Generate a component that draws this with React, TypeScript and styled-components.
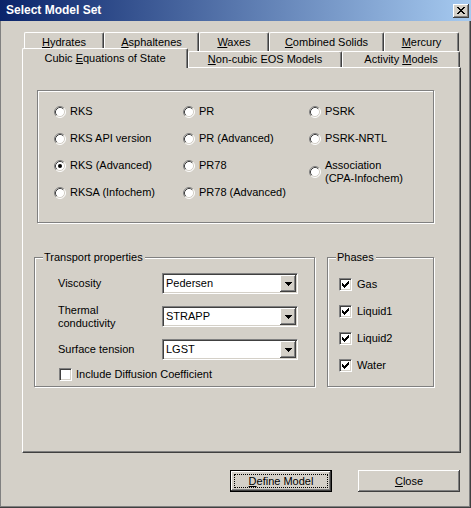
import { FC, Fragment } from "react";
import styled, { createGlobalStyle } from "styled-components";

const GlobalStyle = createGlobalStyle`
	html, body {
		margin: 0;
		padding: 0;
		background: #d4d0c8;
	}
	body {
		font-family: "Liberation Sans", Arial, sans-serif;
		font-size: 11px;
		line-height: 13px;
		color: #000;
	}
	* {
		box-sizing: border-box;
	}
`;

const Window = styled.div`
	width: 471px;
	height: 508px;
	display: flex;
	flex-direction: column;
	background: #d4d0c8;
	overflow: hidden;
`;

const TitleBar = styled.div`
	height: 21px;
	flex: none;
	display: flex;
	align-items: center;
	justify-content: space-between;
	padding: 0 2px 0 6px;
	background: linear-gradient(to right, #0a246a, #a6caf0);
`;

const Title = styled.span`
	color: #fff;
	font-weight: bold;
	font-size: 12px;
`;

const CaptionButton = styled.div`
	width: 16px;
	height: 14px;
	display: flex;
	align-items: center;
	justify-content: center;
	background: #d4d0c8;
	box-shadow: inset -1px -1px #404040, inset 1px 1px #fff, inset -2px -2px #808080;
`;

const Body = styled.div`
	flex: 1;
	display: flex;
	flex-direction: column;
	padding: 11px 10px 0 22px;
	box-shadow: inset -1px -1px #404040, inset -2px -2px #808080, inset 1px 0 #808080;
`;

const TabRow = styled.div<{ $h: number; $indent: number }>`
	display: flex;
	align-items: flex-end;
	height: ${(p) => p.$h}px;
	padding-left: ${(p) => p.$indent}px;
`;

const Tab = styled.div<{ $w: number; $active?: boolean }>`
	position: relative;
	width: ${(p) => p.$w}px;
	height: ${(p) => (p.$active ? "20px" : "100%")};
	margin-bottom: ${(p) => (p.$active ? "-1px" : "0")};
	z-index: ${(p) => (p.$active ? 1 : 0)};
	display: flex;
	align-items: center;
	justify-content: center;
	background: #d4d0c8;
	border-top: 1px solid #fff;
	border-left: 1px solid #fff;
	border-right: 1px solid #404040;
	border-radius: 2px 2px 0 0;
	box-shadow: inset -1px 0 #808080;
	white-space: nowrap;
`;

const Key = styled.span`
	text-decoration: underline;
`;

const Panel = styled.div`
	height: 386px;
	display: flex;
	flex-direction: column;
	padding: 22px 0 0 11px;
	border-top: 1px solid #fff;
	border-left: 1px solid #fff;
	border-right: 1px solid #404040;
	border-bottom: 1px solid #404040;
	box-shadow: inset -1px -1px #808080;
`;

const Group = styled.div<{ $w: number; $h: number; $ml?: number }>`
	position: relative;
	width: ${(p) => p.$w}px;
	height: ${(p) => p.$h}px;
	margin-left: ${(p) => p.$ml ?? 0}px;
	border: 1px solid #808080;
	box-shadow: inset 1px 1px #fff, 1px 1px #fff;
`;

const Legend = styled.span`
	position: absolute;
	top: -7px;
	left: 8px;
	padding: 0 2px 0 1px;
	background: #d4d0c8;
`;

const RadioGrid = styled.div`
	display: grid;
	grid-auto-flow: column;
	grid-template-columns: 129px 126px 1fr;
	grid-template-rows: repeat(4, 27px);
	padding: 7px 0 0 16px;
`;

const Option = styled.label<{ $multi?: boolean }>`
	display: flex;
	align-items: center;
	gap: 4px;
	align-self: ${(p) => (p.$multi ? "start" : "center")};
	margin-top: ${(p) => (p.$multi ? 7 : 0)}px;
	white-space: pre;
`;

const LowerRow = styled.div`
	display: flex;
	gap: 12px;
	margin-top: 34px;
`;

const FieldGrid = styled.div`
	display: grid;
	grid-template-columns: 104px 136px;
	grid-auto-rows: 21px;
	row-gap: 12px;
	align-items: center;
	padding: 15px 0 0 23px;
`;

const FieldLabel = styled.span`
	white-space: pre;
`;

const Combo = styled.div`
	width: 136px;
	height: 21px;
	display: flex;
	align-items: center;
	background: #fff;
	border: 1px solid;
	border-color: #808080 #fff #fff #808080;
	box-shadow: inset 1px 1px #404040, inset -1px -1px #d4d0c8;
	padding: 1px;
`;

const ComboText = styled.span`
	flex: 1;
	padding-left: 2px;
`;

const DropButton = styled.span`
	width: 16px;
	height: 17px;
	display: flex;
	align-items: center;
	justify-content: center;
	background: #d4d0c8;
	box-shadow: inset -1px -1px #404040, inset 1px 1px #fff, inset -2px -2px #808080;
`;

const CheckRow = styled.label<{ $ml?: number; $mt?: number; $gap?: number }>`
	display: flex;
	align-items: center;
	gap: ${(p) => p.$gap ?? 5}px;
	height: 13px;
	margin-left: ${(p) => p.$ml ?? 0}px;
	margin-top: ${(p) => p.$mt ?? 0}px;
`;

const CheckBox = styled.span`
	width: 13px;
	height: 13px;
	flex: none;
	display: flex;
	align-items: center;
	justify-content: center;
	background: #fff;
	border: 1px solid;
	border-color: #808080 #fff #fff #808080;
	box-shadow: inset 1px 1px #404040, inset -1px -1px #d4d0c8;
`;

const PhaseList = styled.div`
	display: flex;
	flex-direction: column;
	gap: 14px;
	padding: 20px 0 0 11px;
`;

const ButtonRow = styled.div`
	display: flex;
	justify-content: flex-end;
	gap: 26px;
	margin-top: 17px;
	padding-right: 1px;
`;

const PushButton = styled.button<{ $default?: boolean }>`
	width: 102px;
	height: 22px;
	margin: 0;
	padding: 4px;
	display: flex;
	border: none;
	background: #d4d0c8;
	font: inherit;
	color: #000;
	box-shadow: ${(p) =>
		p.$default
			? "inset 0 0 0 1px #000, inset -2px -2px #404040, inset 2px 2px #fff, inset -3px -3px #808080"
			: "inset -1px -1px #404040, inset 1px 1px #fff, inset -2px -2px #808080"};
`;

const ButtonFace = styled.span<{ $focus?: boolean }>`
	flex: 1;
	display: flex;
	align-items: center;
	justify-content: center;
	border: 1px dotted ${(p) => (p.$focus ? "#000" : "transparent")};
`;

// pixel glyphs of the classic controls
const CloseGlyph = () => (
	<svg width='8' height='7' viewBox='0 0 8 7' shapeRendering='crispEdges'>
		<path
			d='M0 0h2v1H0zM6 0h2v1H6zM1 1h2v1H1zM5 1h2v1H5zM2 2h4v1H2zM3 3h2v1H3zM2 4h4v1H2zM1 5h2v1H1zM5 5h2v1H5zM0 6h2v1H0zM6 6h2v1H6z'
			fill='#000'
		/>
	</svg>
);

const ArrowGlyph = () => (
	<svg width='7' height='4' viewBox='0 0 7 4' shapeRendering='crispEdges'>
		<path d='M0 0h7v1H0zM1 1h5v1H1zM2 2h3v1H2zM3 3h1v1H3z' fill='#000' />
	</svg>
);

const CheckGlyph = () => (
	<svg width='9' height='9' viewBox='0 0 9 9' shapeRendering='crispEdges'>
		<path
			d='M1 3h1v3H1zM2 4h1v3H2zM3 5h1v3H3zM4 4h1v3H4zM5 3h1v3H5zM6 2h1v3H6zM7 1h1v3H7z'
			fill='#000'
		/>
	</svg>
);

const RadioGlyph: FC<{ checked?: boolean }> = ({ checked }) => (
	<svg width='12' height='12' viewBox='0 0 12 12' style={{ flex: "none" }}>
		<circle cx='6' cy='6' r='5' fill='#fff' />
		<path d='M2.11 9.89A5.5 5.5 0 0 1 9.89 2.11' fill='none' stroke='#808080' />
		<path d='M9.89 2.11A5.5 5.5 0 0 1 2.11 9.89' fill='none' stroke='#fff' />
		<path d='M2.82 9.18A4.5 4.5 0 0 1 9.18 2.82' fill='none' stroke='#404040' />
		<path d='M9.18 2.82A4.5 4.5 0 0 1 2.82 9.18' fill='none' stroke='#d4d0c8' />
		{checked && <circle cx='6' cy='6' r='2' fill='#000' />}
	</svg>
);

// text with an underlined access key, kept in one span so flex does not eat the spaces
const Mnemonic: FC<{ text: string; at: number }> = ({ text, at }) => (
	<span>
		{text.slice(0, at)}
		<Key>{text[at]}</Key>
		{text.slice(at + 1)}
	</span>
);

const backTabs = [
	{ label: "Hydrates", at: 0, w: 80 },
	{ label: "Asphaltenes", at: 0, w: 95 },
	{ label: "Waxes", at: 0, w: 70 },
	{ label: "Combined Solids", at: 0, w: 115 },
	{ label: "Mercury", at: 0, w: 75 },
];

const frontTabs = [
	{ label: "Cubic Equations of State", at: 6, w: 166, active: true },
	{ label: "Non-cubic EOS Models", at: 0, w: 154 },
	{ label: "Activity Models", at: 9, w: 118 },
];

const models = [
	{ name: "RKS" },
	{ name: "RKS API version" },
	{ name: "RKS (Advanced)", checked: true },
	{ name: "RKSA (Infochem)" },
	{ name: "PR" },
	{ name: "PR (Advanced)" },
	{ name: "PR78" },
	{ name: "PR78 (Advanced)" },
	{ name: "PSRK" },
	{ name: "PSRK-NRTL" },
	{ name: "Association\n(CPA-Infochem)", multi: true },
];

const transport = [
	{ label: "Viscosity", value: "Pedersen" },
	{ label: "Thermal\nconductivity", value: "STRAPP" },
	{ label: "Surface tension", value: "LGST" },
];

const phases = ["Gas", "Liquid1", "Liquid2", "Water"];

const App = () => {
	return (
		<>
			<GlobalStyle />
			<Window>
				<TitleBar>
					<Title>Select Model Set</Title>
					<CaptionButton>
						<CloseGlyph />
					</CaptionButton>
				</TitleBar>

				<Body>
					<TabRow $h={19} $indent={2}>
						{backTabs.map((t) => (
							<Tab key={t.label} $w={t.w}>
								<Mnemonic text={t.label} at={t.at} />
							</Tab>
						))}
					</TabRow>
					<TabRow $h={16} $indent={0}>
						{frontTabs.map((t) => (
							<Tab key={t.label} $w={t.w} $active={t.active}>
								<Mnemonic text={t.label} at={t.at} />
							</Tab>
						))}
					</TabRow>

					<Panel>
						<Group $w={397} $h={133} $ml={3}>
							<RadioGrid>
								{models.map((m) => (
									<Option key={m.name} $multi={m.multi}>
										<RadioGlyph checked={m.checked} />
										{m.name}
									</Option>
								))}
							</RadioGrid>
						</Group>

						<LowerRow>
							<Group $w={281} $h={130}>
								<Legend>Transport properties</Legend>
								<FieldGrid>
									{transport.map((f) => (
										<Fragment key={f.label}>
											<FieldLabel>{f.label}</FieldLabel>
											<Combo>
												<ComboText>{f.value}</ComboText>
												<DropButton>
													<ArrowGlyph />
												</DropButton>
											</Combo>
										</Fragment>
									))}
								</FieldGrid>
								<CheckRow $ml={24} $mt={8} $gap={4}>
									<CheckBox />
									Include Diffusion Coefficient
								</CheckRow>
							</Group>

							<Group $w={107} $h={130}>
								<Legend>Phases</Legend>
								<PhaseList>
									{phases.map((p) => (
										<CheckRow key={p}>
											<CheckBox>
												<CheckGlyph />
											</CheckBox>
											{p}
										</CheckRow>
									))}
								</PhaseList>
							</Group>
						</LowerRow>
					</Panel>

					<ButtonRow>
						<PushButton $default>
							<ButtonFace $focus>
								<Mnemonic text='Define Model' at={0} />
							</ButtonFace>
						</PushButton>
						<PushButton>
							<ButtonFace>
								<Mnemonic text='Close' at={0} />
							</ButtonFace>
						</PushButton>
					</ButtonRow>
				</Body>
			</Window>
		</>
	);
};

export default App;
